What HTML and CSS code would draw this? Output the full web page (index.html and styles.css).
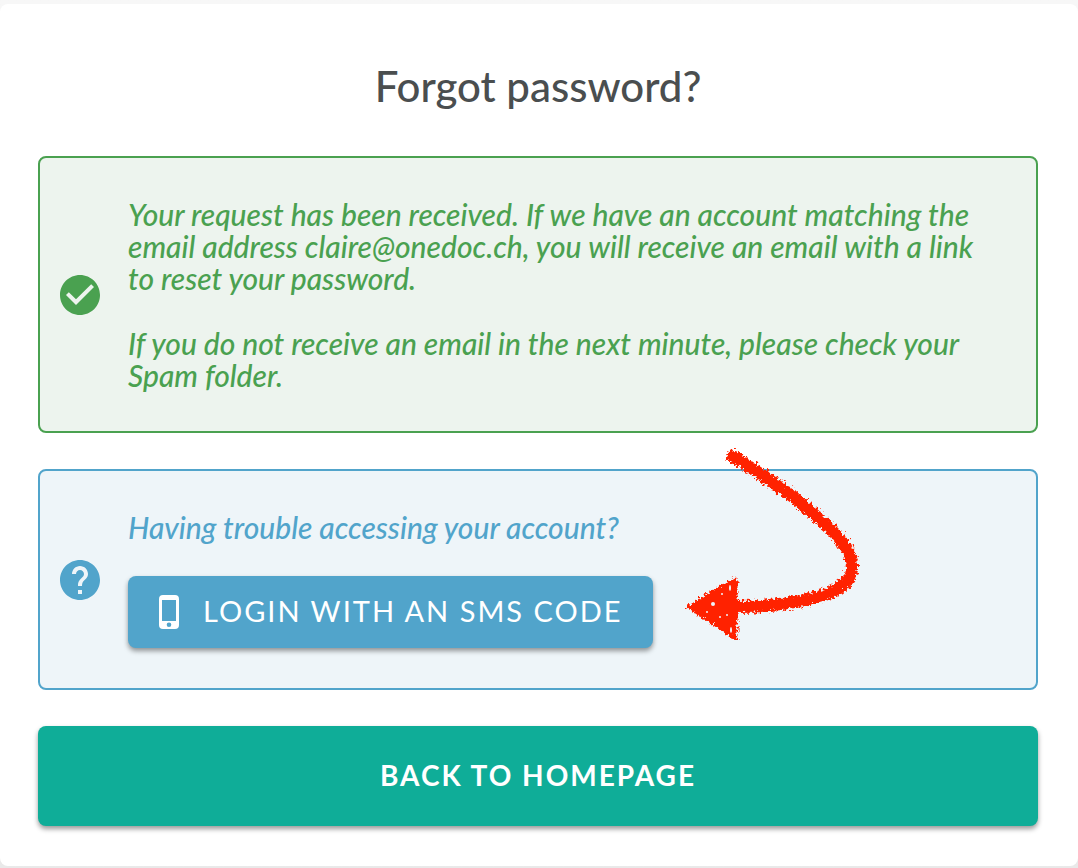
FILE: index.html
```html
<!DOCTYPE html>
<html lang="en">
<head>
<meta charset="utf-8">
<meta name="viewport" content="width=device-width, initial-scale=1">
<title>Forgot password?</title>
<link rel="stylesheet" href="styles.css">
</head>
<body class="page">
<main class="card">
  <h1 class="title">Forgot password?</h1>

  <section class="notice notice-success">
    <svg class="notice-icon" viewBox="2 2 20 20" aria-hidden="true"><path fill="currentColor" d="M12 2C6.480 2 2 6.480 2 12s4.480 10 10 10 10-4.480 10-10S17.520 2 12 2zm-2 15l-5-5 1.410-1.410L10 14.170l7.590-7.590L19 8l-9 9z"/></svg>
    <div class="notice-body">
      <p class="notice-text">Your request has been received. If we have an account matching the email address claire@onedoc.ch, you will receive an email with a link to reset your password.</p>
      <p class="notice-text">If you do not receive an email in the next minute, please check your Spam folder.</p>
    </div>
  </section>

  <section class="notice notice-info">
    <svg class="notice-icon" viewBox="2 2 20 20" aria-hidden="true"><path fill="currentColor" d="M12 2C6.480 2 2 6.480 2 12s4.480 10 10 10 10-4.480 10-10S17.520 2 12 2zm1 17h-2v-2h2v2zm2.070-7.750l-.9.920C13.450 12.900 13 13.500 13 15h-2v-.5c0-1.100.45-2.100 1.170-2.830l1.240-1.260c.37-.36.59-.86.59-1.410 0-1.100-.9-2-2-2s-2 .9-2 2H8c0-2.210 1.790-4 4-4s4 1.790 4 4c0 .88-.36 1.680-.93 2.250z"/></svg>
    <div class="notice-body">
      <p class="notice-text">Having trouble accessing your account?</p>
      <button class="button button-sms" type="button">
        <svg class="phone" viewBox="0 0 20 34" aria-hidden="true"><path fill="currentColor" fill-rule="evenodd" d="M4 0h12a4 4 0 0 1 4 4v26a4 4 0 0 1-4 4H4a4 4 0 0 1-4-4V4a4 4 0 0 1 4-4zM3 5v21h14V5zM10 27.500a2.300 2.300 0 1 0 0 4.600 2.300 2.300 0 0 0 0-4.600z"/></svg>
        <span class="button-label">Login with an SMS code</span>
      </button>
    </div>
    <svg class="arrow" viewBox="0 0 210 220" aria-hidden="true">
      <defs>
        <filter id="crayon" x="-5%" y="-5%" width="110%" height="110%">
          <feTurbulence type="fractalNoise" baseFrequency="0.35" numOctaves="3" seed="4" result="grain"/>
          <feDisplacementMap in="SourceGraphic" in2="grain" scale="9" xChannelSelector="R" yChannelSelector="G"/>
        </filter>
      </defs>
      <g filter="url(#crayon)" fill="#ff2103" stroke="#ff2103">
        <path fill="none" stroke-width="12" d="M58 23C82 39 110 55 133 75C157 95 181 114 182 136C183 157 158 165 131 171C109 175 87 177 65 177"/>
        <path stroke-width="5" stroke-linejoin="round" d="M20 177L65 150V207Z"/>
      </g>
      <g fill="#eef5f9"><ellipse cx="60" cy="158" rx="1" ry="3"/><circle cx="43" cy="174" r="2"/><ellipse cx="61" cy="200" rx="1" ry="3"/><circle cx="52" cy="164" r="1"/><circle cx="50" cy="187" r="1"/><circle cx="57" cy="185" r="1"/><circle cx="37" cy="182" r="1"/></g>
    </svg>
  </section>

  <button class="button button-home" type="button">Back to homepage</button>
</main>
</body>
</html>
```
FILE: styles.css
```css
.page {
  margin: 0;
  padding: 4px 0 2px;
  background: linear-gradient(#f7f7f7, #e9e9e9);
  font-family: Lato, "Open Sans", sans-serif;
}

.card {
  box-sizing: border-box;
  display: flex;
  flex-direction: column;
  gap: 36px;
  padding: 58px 40px 40px 38px;
  border-radius: 8px;
  background: #fff;
}

.title {
  margin: 0 0 10px;
  color: #4a4e4f;
  font-size: 42px;
  font-weight: 500;
  line-height: 48px;
  text-align: center;
}

.notice {
  position: relative;
  display: flex;
  align-items: center;
  gap: 28px;
  padding: 40px;
  padding-left: 20px;
  border: 2px solid currentColor;
  border-radius: 8px;
}

.notice-success {
  color: #4aa150;
  background: #edf4ee;
}

.notice-info {
  color: #51a4cb;
  background: #eef5f9;
}

.notice-icon {
  flex: none;
  width: 40px;
  height: 40px;
}

.notice-body {
  display: flex;
  flex: 1;
  flex-direction: column;
  align-items: flex-start;
  gap: 33px;
}

.notice-text {
  margin: 0;
  font-size: 30px;
  font-style: italic;
  font-weight: 500;
  line-height: 32px;
}

.button {
  border: 0;
  border-radius: 8px;
  color: #fff;
  font-family: inherit;
  font-size: 28px;
  letter-spacing: 2px;
  text-transform: uppercase;
  box-shadow: 0 3px 5px rgba(0, 0, 0, 0.4);
  cursor: pointer;
}

.button-sms {
  display: flex;
  align-items: center;
  gap: 24px;
  padding: 0 31px;
  min-height: 72px;
  background: #51a4cb;
  font-size: 29px;
}

.button-label {
  padding-bottom: 4px;
}

.phone {
  width: 20px;
  height: 34px;
}

.button-home {
  padding-bottom: 4px;
  min-height: 100px;
  background: #0fad98;
  font-weight: 700;
}

.arrow {
  position: absolute;
  top: -41px;
  left: 630px;
  width: 210px;
  height: 220px;
  pointer-events: none;
}
```
